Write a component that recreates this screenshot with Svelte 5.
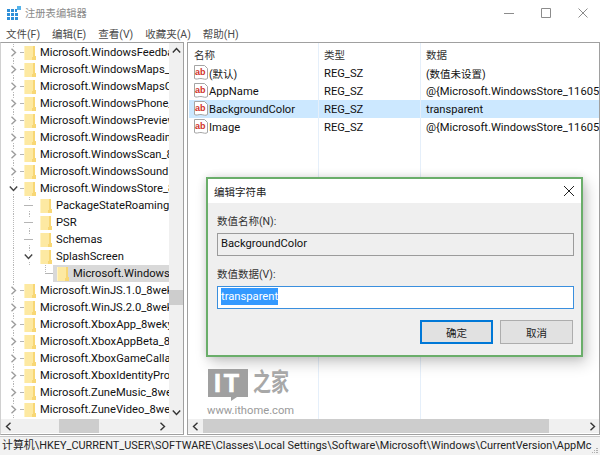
<script lang="ts">
  interface TreeRow {
    label: string;
    depth: number;
    toggle?: 'closed' | 'open';
    selected?: boolean;
  }

  const treeRows: TreeRow[] = [
    { label: 'Microsoft.WindowsFeedback_8wekyb3d8bbwe', depth: 0, toggle: 'closed' },
    { label: 'Microsoft.WindowsMaps_8wekyb3d8bbwe', depth: 0, toggle: 'closed' },
    { label: 'Microsoft.WindowsMapsCache', depth: 0, toggle: 'closed' },
    { label: 'Microsoft.WindowsPhone_8wekyb3d8bbwe', depth: 0, toggle: 'closed' },
    { label: 'Microsoft.WindowsPreview_8wekyb3d8bbwe', depth: 0, toggle: 'closed' },
    { label: 'Microsoft.WindowsReadingList_8wekyb3d8bbwe', depth: 0, toggle: 'closed' },
    { label: 'Microsoft.WindowsScan_8wekyb3d8bbwe', depth: 0, toggle: 'closed' },
    { label: 'Microsoft.WindowsSoundRecorder', depth: 0, toggle: 'closed' },
    { label: 'Microsoft.WindowsStore_8wekyb3d8bbwe', depth: 0, toggle: 'open' },
    { label: 'PackageStateRoaming', depth: 1 },
    { label: 'PSR', depth: 1 },
    { label: 'Schemas', depth: 1 },
    { label: 'SplashScreen', depth: 1, toggle: 'open' },
    { label: 'Microsoft.WindowsStore_8wekyb3d8bbwe', depth: 2, selected: true },
    { label: 'Microsoft.WinJS.1.0_8wekyb3d8bbwe', depth: 0, toggle: 'closed' },
    { label: 'Microsoft.WinJS.2.0_8wekyb3d8bbwe', depth: 0, toggle: 'closed' },
    { label: 'Microsoft.XboxApp_8wekyb3d8bbwe', depth: 0, toggle: 'closed' },
    { label: 'Microsoft.XboxAppBeta_8wekyb3d8bbwe', depth: 0, toggle: 'closed' },
    { label: 'Microsoft.XboxGameCallableUI', depth: 0, toggle: 'closed' },
    { label: 'Microsoft.XboxIdentityProvider', depth: 0, toggle: 'closed' },
    { label: 'Microsoft.ZuneMusic_8wekyb3d8bbwe', depth: 0, toggle: 'closed' },
    { label: 'Microsoft.ZuneVideo_8wekyb3d8bbwe', depth: 0, toggle: 'closed' },
  ];

  const values = [
    { name: '(默认)', type: 'REG_SZ', data: '(数值未设置)', cjk: true },
    { name: 'AppName', type: 'REG_SZ', data: '@{Microsoft.WindowsStore_11605.1001.4.0_x64' },
    { name: 'BackgroundColor', type: 'REG_SZ', data: 'transparent', selected: true },
    { name: 'Image', type: 'REG_SZ', data: '@{Microsoft.WindowsStore_11605.1001.4.0_x64' },
  ];

  const menus = ['文件(F)', '编辑(E)', '查看(V)', '收藏夹(A)', '帮助(H)'];
</script>

{#snippet chevron(dir: string)}
  <svg class="chev" width="9" height="9" viewBox="0 0 9 9" aria-hidden="true">
    {#if dir === 'right'}
      <path d="M2.500 .8 6.500 4.500 2.500 8.200" />
    {:else if dir === 'left'}
      <path d="M6.500 .8 2.500 4.500 6.500 8.200" />
    {:else if dir === 'down'}
      <path d="M.8 2.500 4.500 6.500 8.200 2.500" />
    {:else}
      <path d="M.8 6.500 4.500 2.500 8.200 6.500" />
    {/if}
  </svg>
{/snippet}

<div class="window">
  <header class="titlebar">
    <svg class="app-icon" width="14" height="14" viewBox="0 0 14 14" aria-hidden="true">
      <path fill="#2f8fd8" d="M0 3h3v3H0zM4 3h3v3H4zM8 3h2v3H8zM0 7h3v3H0zM4 7h3v3H4zM8 7h3v3H8zM0 11h3v3H0zM4 11h3v3H4zM8 11h3v3H8z" />
      <path fill="#55b3ea" d="M10 0h4v4h-4z" />
    </svg>
    <span class="app-title">注册表编辑器</span>
    <div class="win-controls">
      <svg width="10" height="10" viewBox="0 0 10 10" aria-hidden="true"><path d="M0 5.500h10" /></svg>
      <svg width="10" height="10" viewBox="0 0 10 10" aria-hidden="true"><path d="M.5.5h9v9h-9z" /></svg>
      <svg width="10" height="10" viewBox="0 0 10 10" aria-hidden="true"><path d="M.5.5l9 9M9.500.5l-9 9" /></svg>
    </div>
  </header>

  <nav class="menubar">
    {#each menus as menu}
      <span>{menu}</span>
    {/each}
  </nav>

  <div class="panes">
    <section class="tree-pane">
      <div class="tree-body">
        <div class="tree-list">
          {#each treeRows as row}
            <div class="tree-row depth-{row.depth}" class:selected={row.selected}>
              <span class="guide-root"></span>
              {#if row.depth > 0}
                <span class="guide-mid"></span>
              {/if}
              <span class="toggle" class:open={row.toggle === 'open'}>
                {#if row.toggle === 'closed'}
                  {@render chevron('right')}
                {:else if row.toggle === 'open'}
                  {@render chevron('down')}
                {:else}
                  <span class="dash"></span>
                {/if}
              </span>
              {#if row.depth === 0}
                <span class="dash short"></span>
              {/if}
              <svg class="folder" width="12" height="14" viewBox="0 0 12 14" aria-hidden="true">
                <path fill="#fde9a2" d="M0 0h11v14H0z" />
                <path fill="#f8d775" d="M9 0h2v10h1v4H8v-3h1z" />
                <path fill="#fff3c4" d="M0 0h1v14H0z" />
              </svg>
              <span class="tree-label">{row.label}</span>
            </div>
          {/each}
        </div>
        <div class="v-scroll">
          <span class="arrow">{@render chevron('up')}</span>
          <div class="v-track"><div class="v-thumb"></div></div>
          <span class="arrow">{@render chevron('down')}</span>
        </div>
      </div>
      <div class="h-scroll">
        <span class="arrow">{@render chevron('left')}</span>
        <div class="h-track tree-track"><div class="h-thumb"></div></div>
        <span class="arrow">{@render chevron('right')}</span>
        <span class="corner"></span>
      </div>
    </section>

    <section class="values-pane">
      <div class="values-body">
        <div class="list-head">
          <span class="col-name">名称</span>
          <span class="col-type">类型</span>
          <span class="col-data">数据</span>
        </div>
        {#each values as value}
          <div class="list-row" class:selected={value.selected} class:cjk={value.cjk}>
            <span class="col-name">
              <svg class="ab-icon" width="14" height="16" viewBox="0 0 14 16" aria-hidden="true">
                <path fill="#fff" stroke="#a5a5a5" d="M.5.5h10l3 3v10c-2 1.600-4 .2-6.500 0s-4.500 1.400-6.500 0z" />
                <text x="1" y="9.800" class="ab-text">ab</text>
              </svg>
              <span class="cell-text">{value.name}</span>
            </span>
            <span class="col-type">{value.type}</span>
            <span class="col-data"><span class="cell-text">{value.data}</span></span>
          </div>
        {/each}
        <span class="sep sep-a"></span>
        <span class="sep sep-b"></span>
      </div>
      <div class="h-scroll">
        <span class="arrow">{@render chevron('left')}</span>
        <div class="h-track values-track"><div class="h-thumb"></div></div>
        <span class="arrow">{@render chevron('right')}</span>
      </div>
    </section>
  </div>

  <footer class="statusbar">
    计算机\HKEY_CURRENT_USER\SOFTWARE\Classes\Local Settings\Software\Microsoft\Windows\CurrentVersion\AppMc
    <svg class="grip" width="6" height="6" viewBox="0 0 6 6" aria-hidden="true">
      <path fill="#b0b0b0" d="M4 0h2v1H4zM2 2h1v1H2zM4 2h2v1H4zM0 4h1v1H0zM2 4h1v1H2zM4 4h2v1H4z" />
    </svg>
  </footer>

  <div class="dialog" role="dialog">
    <div class="dialog-title">
      <span>编辑字符串</span>
      <svg width="12" height="12" viewBox="0 0 12 12" aria-hidden="true"><path d="M1 1l10 10M11 1 1 11" /></svg>
    </div>
    <div class="dialog-body">
      <label for="value-name">数值名称(N):</label>
      <div id="value-name" class="field readonly">BackgroundColor</div>
      <label for="value-data">数值数据(V):</label>
      <div id="value-data" class="field focused"><span class="text-sel">transparent</span></div>
      <div class="dialog-actions">
        <button class="primary">确定</button>
        <button>取消</button>
      </div>
    </div>
  </div>

  <div class="watermark">
    <div class="wm-logo">
      <div class="wm-bubble">IT</div>
      <span class="wm-cn">之家</span>
    </div>
    <div class="wm-url">www.ithome.com</div>
  </div>
</div>

<style>
  :global(body) {
    margin: 0;
    background: #fff;
  }

  .window {
    position: relative;
    width: 600px;
    height: 455px;
    display: flex;
    flex-direction: column;
    overflow: hidden;
    background: #fff;
    color: #111;
    font-family: Roboto, "Noto Sans CJK SC", sans-serif;
    font-size: 11.200px;
  }

  .titlebar {
    height: 25px;
    flex: none;
    display: flex;
    align-items: center;
    padding-left: 7px;
    box-sizing: border-box;
  }

  .app-title {
    margin-left: 4px;
    color: #8a8a8a;
    font-size: 10.300px;
  }

  .win-controls {
    margin-left: auto;
    display: flex;
    gap: 27px;
    padding-right: 12px;
  }

  .win-controls path {
    fill: none;
    stroke: #8c8c8c;
  }

  .menubar {
    height: 17px;
    flex: none;
    display: flex;
    gap: 12px;
    align-items: center;
    padding-left: 6px;
    color: #4a4a4a;
    font-size: 10.500px;
  }

  .panes {
    flex: none;
    height: 394px;
    display: flex;
    gap: 3px;
  }

  .tree-pane,
  .values-pane {
    display: flex;
    flex-direction: column;
    box-sizing: border-box;
    border: 1px solid #a0a0a0;
    background: #fff;
    height: 393px;
  }

  .tree-pane {
    width: 184px;
    border-left-color: #d0d0d0;
  }

  .values-pane {
    width: 413px;
  }

  .tree-body {
    flex: 1;
    display: flex;
    min-height: 0;
  }

  .tree-list {
    flex: 1;
    min-width: 0;
    padding-top: 1px;
    overflow: hidden;
  }

  .tree-row {
    position: relative;
    height: 17px;
    display: flex;
    align-items: center;
    white-space: nowrap;
    overflow: hidden;
  }

  .toggle {
    width: 9px;
    height: 9px;
    flex: none;
    display: flex;
    align-items: center;
    z-index: 1;
    background: #fff;
  }

  .depth-0 .toggle { margin-left: 8px; }
  .depth-1 .toggle { margin-left: 23px; }
  .depth-2 .toggle { margin-left: 44px; width: 8px; background: transparent; }

  .depth-1 .folder { margin-left: 7px; }
  .depth-2 .folder { margin-left: 4px; }

  .folder {
    flex: none;
    z-index: 1;
  }

  .tree-label {
    margin-left: 4px;
    color: #111;
  }

  .tree-row.selected {
    background: linear-gradient(to right, #fff 52px, #d9d9d9 52px);
  }

  .dash {
    display: block;
    width: 100%;
    height: 0;
    border-top: 1px solid #b5b5b5;
  }

  .dash.short {
    width: 4px;
    flex: none;
    margin-left: 2px;
  }

  .guide-root,
  .guide-mid {
    position: absolute;
    top: 0;
    bottom: 0;
    width: 0;
    border-left: 1px dotted #b8b8b8;
  }

  .guide-root { left: 12px; }
  .guide-mid { left: 28px; }
  .depth-2 .guide-mid { left: 44px; bottom: 8px; }

  .chev {
    display: block;
  }

  .chev path {
    fill: none;
    stroke: #9c9c9c;
    stroke-width: 1.400;
  }

  .toggle.open :global(.chev path) {
    stroke: #444;
  }

  .v-scroll {
    width: 14px;
    flex: none;
    display: flex;
    flex-direction: column;
    background: #f0f0f0;
  }

  .v-track {
    flex: 1;
    position: relative;
  }

  .v-thumb {
    position: absolute;
    left: 0;
    right: 0;
    top: 233px;
    height: 15px;
    background: #cdcdcd;
  }

  .arrow {
    flex: none;
    width: 14px;
    height: 14px;
    display: flex;
    align-items: center;
    justify-content: center;
  }

  .arrow :global(.chev path) {
    stroke: #333;
  }

  .h-scroll {
    height: 14px;
    flex: none;
    display: flex;
    background: #f0f0f0;
    margin-bottom: 1px;
  }

  .corner {
    flex: none;
    width: 14px;
  }

  .h-track {
    flex: 1;
    position: relative;
  }

  .h-thumb {
    position: absolute;
    top: 0;
    bottom: 0;
    background: #cdcdcd;
  }

  .tree-track .h-thumb { left: 44px; width: 40px; }
  .values-track .h-thumb { left: 1px; width: 346px; }

  .values-body {
    position: relative;
    flex: 1;
    min-height: 0;
  }

  .list-head {
    height: 21px;
    display: flex;
    align-items: center;
    color: #333;
    padding-top: 1px;
    box-sizing: border-box;
    margin-left: 1px;
    font-size: 10.500px;
  }

  .list-row {
    height: 18px;
    display: flex;
    align-items: center;
    margin-left: 1px;
    padding-top: 1px;
    box-sizing: border-box;
  }

  .list-row.selected {
    background: #cce8ff;
  }

  .list-row.cjk .cell-text {
    font-size: 10.500px;
  }

  .col-name {
    width: 130px;
    flex: none;
    padding-left: 5px;
    box-sizing: border-box;
    display: flex;
    align-items: center;
    gap: 1px;
    white-space: nowrap;
  }

  .col-type {
    width: 102px;
    flex: none;
    padding-left: 5px;
    box-sizing: border-box;
  }

  .col-data {
    flex: 1;
    min-width: 0;
    padding-left: 5px;
    overflow: hidden;
    white-space: nowrap;
    box-sizing: border-box;
  }

  .ab-icon {
    flex: none;
    margin-top: -1px;
  }

  .ab-text {
    font-family: "Liberation Sans", sans-serif;
    font-size: 9px;
    font-weight: 700;
    fill: #d0322a;
  }

  .sep {
    position: absolute;
    top: 0;
    bottom: 0;
    width: 1px;
    background: #e5effa;
  }

  .sep-a { left: 130px; }
  .sep-b { left: 232px; }

  .statusbar {
    position: relative;
    flex: none;
    height: 18px;
    line-height: 18px;
    padding-left: 2px;
    background: #f2f2f2;
    border-top: 1px solid #c8c8c8;
    white-space: nowrap;
    overflow: hidden;
    color: #222;
    font-size: 10.900px;
  }

  .grip {
    position: absolute;
    right: 2px;
    bottom: 1px;
  }

  .dialog {
    position: absolute;
    left: 206px;
    top: 177px;
    width: 377px;
    height: 180px;
    box-sizing: border-box;
    border: 2px solid #6aae6a;
    background: #efefef;
    box-shadow: 4px 6px 14px rgba(0, 0, 0, 0.2), 0 0 8px rgba(0, 0, 0, 0.12);
    display: flex;
    flex-direction: column;
  }

  .dialog-title {
    height: 24px;
    flex: none;
    background: #fff;
    display: flex;
    align-items: center;
    justify-content: space-between;
    padding: 0 6px;
    color: #222;
    font-size: 10.500px;
  }

  .dialog-title path {
    fill: none;
    stroke: #222;
    stroke-width: 1;
  }

  .dialog-body {
    flex: 1;
    padding: 10px 7px 0 9px;
    display: flex;
    flex-direction: column;
  }

  .dialog-body label {
    height: 18px;
    line-height: 18px;
    color: #333;
    font-size: 10.500px;
  }

  .field {
    height: 23px;
    line-height: 20px;
    box-sizing: border-box;
    padding-left: 3px;
    margin: 2px 0 10px;
    white-space: nowrap;
  }

  .field.readonly {
    border: 1px solid #9b9b9b;
    background: #efefef;
  }

  .field.focused {
    border: 1px solid #3a8fde;
    background: #fff;
  }

  .text-sel {
    background: #3399ff;
    color: #fff;
    display: inline-block;
    height: 17px;
    line-height: 17px;
  }

  .dialog-actions {
    display: flex;
    justify-content: flex-end;
    gap: 7px;
    margin: 1px 1px 0 0;
  }

  .dialog-actions button {
    width: 73px;
    height: 24px;
    box-sizing: border-box;
    border: 1px solid #adadad;
    background: #e1e1e1;
    font: inherit;
    font-size: 10.500px;
    color: #222;
    padding: 0;
  }

  .dialog-actions button.primary {
    border: 2px solid #0078d7;
  }

  .watermark {
    position: absolute;
    left: 207px;
    top: 369px;
    color: #9a9a9a;
  }

  .wm-logo {
    display: flex;
    align-items: flex-start;
    gap: 5px;
  }

  .wm-bubble {
    position: relative;
    width: 40px;
    height: 28px;
    background: #a0a0a0;
    color: #fff;
    font-family: "Liberation Sans", sans-serif;
    font-weight: 700;
    font-size: 25px;
    line-height: 28px;
    letter-spacing: 3px;
    -webkit-text-stroke: 0.7px #fff;
    text-align: center;
    margin-left: 1px;
  }

  .wm-bubble::after {
    content: "";
    position: absolute;
    left: 23px;
    top: 28px;
    border-style: solid;
    border-width: 4px 6px 0 0;
    border-color: #a0a0a0 transparent transparent transparent;
  }

  .wm-cn {
    font-size: 18px;
    line-height: 28px;
    font-weight: 700;
    color: #a8a8a8;
    transform: scaleY(1.400);
  }

  .wm-url {
    margin-top: 7px;
    font-size: 11.200px;
    color: #9a9a9a;
  }
</style>
